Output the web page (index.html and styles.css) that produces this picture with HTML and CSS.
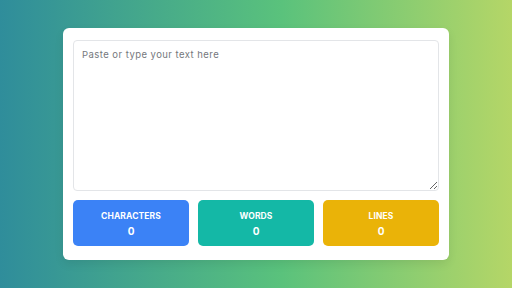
FILE: index.html
```
<!DOCTYPE html>
<html>
<head>
<meta charset="utf-8">
<link rel="stylesheet" href="styles.css">
</head>
<body>
<div class="card">
  <textarea class="input" placeholder="Paste or type your text here"></textarea>
  <div class="stats">
    <div class="stat blue"><div class="label">Characters</div><div class="value">0</div></div>
    <div class="stat teal"><div class="label">Words</div><div class="value">0</div></div>
    <div class="stat yellow"><div class="label">Lines</div><div class="value">0</div></div>
  </div>
</div>
</body>
</html>
```
FILE: styles.css
```
html, body { margin: 0; height: 100%; }
body {
  width: 512px; height: 288px;
  background: linear-gradient(to right, #2f8d9b 0%, #5ac27c 55%, #b5d667 100%);
  font-family: Inter, "Open Sans", sans-serif;
  display: flex; align-items: flex-start; justify-content: center;
  padding-top: 28px; box-sizing: border-box;
}
.card {
  width: 386px; box-sizing: border-box;
  background: #fff; border-radius: 6px;
  padding: 12px 10px 14px;
  box-shadow: 0 4px 10px rgba(0,0,0,0.08);
}
.input {
  display: block; width: 100%; height: 151px; box-sizing: border-box;
  border: 1px solid #e3e5e8; border-radius: 4px;
  padding: 8px 8px; margin: 0;
  font-family: inherit; font-size: 9.5px; letter-spacing: 0.45px; color: #333;
  resize: vertical; outline: none;
}
.input::placeholder { color: #75787d; }
.stats {
  display: grid; grid-template-columns: repeat(3, 1fr); gap: 9px;
  margin-top: 9px;
}
.stat {
  height: 46px; border-radius: 5px; color: #fff;
  display: flex; flex-direction: column; align-items: center; justify-content: center;
  gap: 4px; font-weight: 700;
  padding-top: 1px; box-sizing: border-box;
}
.label { font-size: 8.5px; text-transform: uppercase; letter-spacing: 0.1px; }
.value { font-size: 10px; }
.blue { background: #3b82f6; }
.teal { background: #14b8a6; }
.yellow { background: #eab308; }
```
